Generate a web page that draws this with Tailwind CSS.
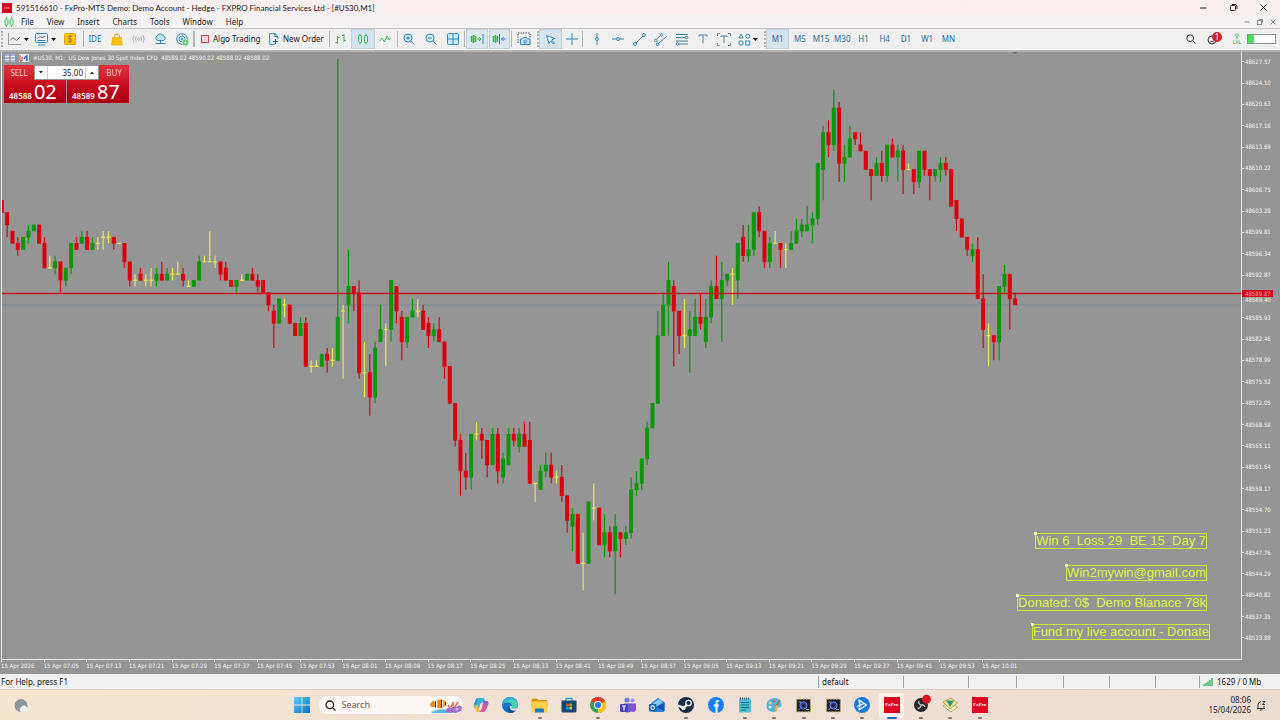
<!DOCTYPE html>
<html lang="en">
<head>
    <meta charset="UTF-8">
    <meta name="viewport" content="width=device-width, initial-scale=1.0">
    <title>591516610 - FxPro-MT5 Demo</title>
    <script src="https://cdn.jsdelivr.net/npm/@tailwindcss/browser@4"></script>
    <style>
        body { font-family: 'Noto Sans', 'Open Sans', sans-serif; }
        svg { display: block; flex-shrink: 0; }
        .ico { fill: none; stroke: #2c86b8; stroke-width: 1; }
    </style>
</head>
<body class="h-screen flex flex-col overflow-hidden bg-[#f3f1f2] text-[8px] leading-[12px] text-[#222]">

    <!-- Title bar -->
    <header class="flex h-[15px] shrink-0 items-center bg-linear-to-r from-[#f6f1f3] via-[#fbeeee] to-[#f8efee] pl-[2px]">
        <svg width="10" height="10" viewBox="0 0 10 10"><rect width="10" height="10" fill="#d9001b"/><path d="M2 5h6" stroke="#fff" stroke-width="1" stroke-dasharray="1.4 .4" opacity=".8"/></svg>
        <h1 class="ml-1 font-['Lato',sans-serif] whitespace-nowrap">591516610 - FxPro-MT5 Demo: Demo Account - Hedge - FXPRO Financial Services Ltd - [#US30,M1]</h1>
        <div class="ml-auto flex pr-[2px]">
            <button aria-label="Minimize" class="flex w-[30px] justify-center"><svg width="9" height="9" viewBox="0 0 9 9"><path d="M1 5h6.500" stroke="#222"/></svg></button>
            <button aria-label="Restore" class="flex w-[30px] justify-center"><svg width="9" height="9" viewBox="0 0 9 9" fill="none" stroke="#222"><rect x="1.500" y="2.500" width="5" height="5" rx="1"/><path d="M3 1.500h3q2 0 2 2v2.500"/></svg></button>
            <button aria-label="Close" class="flex w-[30px] justify-center"><svg width="9" height="9" viewBox="0 0 9 9"><path d="M1.500 1.500l6 6m0-6l-6 6" stroke="#222"/></svg></button>
        </div>
    </header>

    <!-- Menu -->
    <nav class="flex h-[13px] shrink-0 items-center bg-[#f4f2f2]">
        <svg class="ml-1" width="10" height="10" viewBox="0 0 10 10" fill="none" stroke="#3fc85a"><path d="M2.500 0v10M7.500 0v10"/><rect x="1" y="2" width="3" height="6" rx="1" fill="#f4f2f2"/><rect x="6" y="2" width="3" height="6" rx="1" fill="#f4f2f2"/></svg>
        <div class="ml-[7px] flex gap-[13px]">
            <button>File</button>
            <button>View</button>
            <button>Insert</button>
            <button>Charts</button>
            <button>Tools</button>
            <button>Window</button>
            <button>Help</button>
        </div>
        <div class="ml-auto flex gap-[5px] pr-[3px] opacity-50">
            <button aria-label="Minimize chart"><svg width="8" height="8" viewBox="0 0 8 8"><path d="M1.500 4h5" stroke="#222"/></svg></button>
            <button aria-label="Restore chart"><svg width="8" height="8" viewBox="0 0 8 8" fill="none" stroke="#222"><rect x="1.500" y="2.500" width="4" height="4"/><path d="M3 1.500h3.500V5"/></svg></button>
            <button aria-label="Close chart"><svg width="8" height="8" viewBox="0 0 8 8"><path d="M1.500 1.500l5 5m0-5l-5 5" stroke="#222"/></svg></button>
        </div>
    </nav>

    <!-- Toolbar -->
    <div class="flex h-[22px] shrink-0 items-center border-t border-[#c4c4c4] border-b border-b-white bg-[#f0f0f0] text-[#2b6c97]">
        <i class="h-4 w-[3px] border-r-2 border-dotted border-[#b5b5b5]"></i>
        <button aria-label="Chart type" class="flex h-full w-[27px] items-center gap-[2px] pl-[5px]">
            <svg class="ico" width="14" height="14" viewBox="0 0 14 14"><path d="M.5 1v11.500H13" stroke="#9a9a9a"/><path d="M2 8.500L5 5.500 8.500 8.500 12 5" stroke="#4d7f92"/></svg>
            <svg width="5" height="3"><path d="M0 0h5L2.500 3z" fill="#111"/></svg>
        </button>
        <button aria-label="Templates" class="flex h-full w-[27px] items-center gap-[2px] pl-[5px]">
            <svg class="ico" width="14" height="14" viewBox="0 0 14 14"><rect x=".5" y="1.500" width="12" height="9" rx="1"/><path d="M3 13h7M2.500 8.500h8" /><path d="M2.500 6.500l2.500-2 2 1.200L10.500 4" stroke="#4d7f92"/></svg>
            <svg width="5" height="3"><path d="M0 0h5L2.500 3z" fill="#111"/></svg>
        </button>
        <button aria-label="Symbols" class="flex h-full w-[26px] items-center justify-center">
            <svg width="12" height="12" viewBox="0 0 12 12"><rect x=".5" y=".5" width="11" height="11" rx="1" fill="#f9c513" stroke="#dca60c"/><path d="M8 4Q7.500 3 6 3T4 4.400 6 6t2 1.500T6 9 4 8M6 1.800v8.400" fill="none" stroke="#a5710a" stroke-width=".9"/></svg>
        </button>
        <i class="h-4 w-px bg-[#b4b4b4]"></i>
        <div class="flex h-full w-[109px]">
            <button class="flex-1">IDE</button>
            <button aria-label="Market" class="flex flex-1 items-center justify-center"><svg width="12" height="13" viewBox="0 0 12 13"><path d="M3.500 6V3.500a2.500 2.500 0 015 0V6" fill="none" stroke="#d39a09"/><path d="M1.500 4.500h9l.8 7.500H.7z" fill="#f8c115" stroke="#dfa50c" stroke-width=".6"/></svg></button>
            <button aria-label="Signals" class="flex flex-1 items-center justify-center"><svg width="13" height="10" viewBox="0 0 13 10" fill="none" stroke="#b8b8b8"><circle cx="6.500" cy="5" r="1.200"/><path d="M4.200 2.500q-1.700 2.500 0 5M8.800 2.500q1.700 2.500 0 5M2.200 1q-3 4 0 8M10.800 1q3 4 0 8"/></svg></button>
            <button aria-label="VPS" class="flex flex-1 items-center justify-center"><svg class="ico" width="13" height="12" viewBox="0 0 13 12"><path d="M3.500 7.500a2.600 2.600 0 01-.3-4.600 3.500 3.500 0 016.400.2 2.300 2.300 0 010 4.400z" fill="#bfe6f7"/><path d="M6.500 7.500V10M1.500 10.500h10"/></svg></button>
            <button aria-label="Services" class="flex flex-1 items-center justify-center"><svg class="ico" width="13" height="13" viewBox="0 0 13 13"><circle cx="6" cy="6" r="5.300"/><circle cx="6" cy="6" r="3"/><circle cx="6" cy="6" r="1"/><circle cx="9.500" cy="9.500" r="3.300" fill="#4cc95c" stroke="#f0f0f0" stroke-width=".5"/><path d="M9.500 7.700v3.600M7.700 9.500h3.600" stroke="#fff"/></svg></button>
        </div>
        <i class="h-4 w-[2px] bg-[#b4b4b4]"></i>
        <button class="flex h-full w-[68px] items-center gap-1 pl-[6px] text-[#222] whitespace-nowrap">
            <svg width="8" height="8" viewBox="0 0 8 8"><rect x=".5" y=".5" width="7" height="7" fill="#f8d4d6" stroke="#c74751"/></svg>Algo Trading
        </button>
        <button class="flex h-full w-[66px] items-center gap-1 pl-[6px] text-[#222] whitespace-nowrap">
            <svg class="ico" width="10" height="12" viewBox="0 0 10 12"><path d="M6 11.300H.7V.7H6L9 3.500V6"/><path d="M6 .7v3h3M6.500 6v5M4 8.500h5" stroke="#256a8c"/></svg>New Order
        </button>
        <i class="h-4 w-px bg-[#b4b4b4]"></i>
        <div class="flex h-full w-[66px]">
            <button aria-label="Bars" class="flex flex-1 items-center justify-center"><svg width="12" height="12" viewBox="0 0 12 12" fill="none" stroke="#3fae55"><path d="M2.500 3v8M.5 9.500h2M2.500 4.500h2M9 1v8M7 2.500h2M9 7.500h2"/></svg></button>
            <button aria-label="Candles" class="flex flex-1 items-center justify-center border border-[#c3cfd8] bg-[#d6e4ef]"><svg width="12" height="12" viewBox="0 0 12 12" fill="none" stroke="#35b650"><path d="M3 .5v11M9 .5v11"/><rect x="1.500" y="2.500" width="3" height="7" rx="1" fill="#d6f3da"/><rect x="7.500" y="2.500" width="3" height="7" rx="1" fill="#d6f3da"/></svg></button>
            <button aria-label="Line" class="flex flex-1 items-center justify-center"><svg width="12" height="8" viewBox="0 0 12 8" fill="none" stroke="#35b650"><path d="M.5 6l2.500-3 2.500 4 2.500-6 2 4 1.500-2"/></svg></button>
        </div>
        <i class="ml-px h-4 w-px bg-[#b4b4b4]"></i>
        <div class="flex h-full w-[66px]">
            <button aria-label="Zoom in" class="flex flex-1 items-center justify-center"><svg class="ico" width="12" height="12" viewBox="0 0 12 12"><circle cx="5" cy="5" r="4" fill="#d8eefa"/><path d="M8 8l3.500 3.500M3 5h4M5 3v4"/></svg></button>
            <button aria-label="Zoom out" class="flex flex-1 items-center justify-center"><svg class="ico" width="12" height="12" viewBox="0 0 12 12"><circle cx="5" cy="5" r="4" fill="#d8eefa"/><path d="M8 8l3.500 3.500M3 5h4"/></svg></button>
            <button aria-label="Tile windows" class="flex flex-1 items-center justify-center"><svg class="ico" width="12" height="12" viewBox="0 0 12 12"><rect x=".5" y=".5" width="11" height="11" rx="1" fill="#c9e9f8"/><path d="M6 .5v11M.5 6h11"/></svg></button>
        </div>
        <i class="h-4 w-px bg-[#b4b4b4]"></i>
        <div class="flex h-full w-[45px] gap-px pl-px">
            <button aria-label="Auto scroll" class="flex flex-1 items-center justify-center border border-[#c3cfd8] bg-[#dbe6ef]"><svg width="14" height="10" viewBox="0 0 14 10" fill="none" stroke="#35b650"><path d="M1.500 2v6M3.500 1v8M5.500 2v6" stroke-width="1.600"/><path d="M7 5h4M9 3l2 2-2 2"/><path d="M13 0v10" stroke="#2c86b8"/></svg></button>
            <button aria-label="Chart shift" class="flex flex-1 items-center justify-center border border-[#c3cfd8] bg-[#dbe6ef]"><svg width="14" height="10" viewBox="0 0 14 10" fill="none" stroke="#35b650"><path d="M1.500 2v6M3.500 1v8M5.500 2v6" stroke-width="1.600"/><path d="M7.500 0v10M13.500 5H9.500M11.500 3l-2 2 2 2" stroke="#2c86b8"/></svg></button>
        </div>
        <i class="ml-px h-4 w-px bg-[#b4b4b4]"></i>
        <button aria-label="Screenshot" class="flex h-full w-[24px] items-center justify-center"><svg class="ico" width="14" height="14" viewBox="0 0 14 14"><path d="M1 11V1h12v5" stroke="#555" stroke-dasharray="1.500 1"/><path d="M3.500 7h2l1-1.500h3L10.500 7h2.500v5.500H3.500z" fill="#c9e9f8"/><circle cx="8.200" cy="9.500" r="1.500"/></svg></button>
        <i class="h-4 w-[3px] border-r-2 border-dotted border-[#b5b5b5]"></i>
        <div class="flex h-full w-[43px]">
            <button aria-label="Cursor" class="flex flex-1 items-center justify-center border border-[#c3cfd8] bg-[#d6e4ef]"><svg class="ico" width="11" height="11" viewBox="0 0 11 11"><path d="M1.500 1.500l8 3-3 1.500 3 3-1 1-3-3L4 9.500z" fill="#e6f4fb"/></svg></button>
            <button aria-label="Crosshair" class="flex flex-1 items-center justify-center"><svg class="ico" width="12" height="12" viewBox="0 0 12 12"><path d="M6 0v5M6 7v5M0 6h5M7 6h5"/><circle cx="6" cy="6" r=".6"/></svg></button>
        </div>
        <i class="h-4 w-px bg-[#b4b4b4]"></i>
        <div class="ml-[3px] flex h-full w-[149px]">
            <button aria-label="Vertical line" class="flex flex-1 items-center justify-center"><svg class="ico" width="6" height="12" viewBox="0 0 6 12"><path d="M3 0v4.500M3 7.500V12" stroke="#4d7f92"/><circle cx="3" cy="6" r="1.500"/></svg></button>
            <button aria-label="Horizontal line" class="flex flex-1 items-center justify-center"><svg class="ico" width="12" height="6" viewBox="0 0 12 6"><path d="M0 3h4.500M7.500 3H12" stroke="#4d7f92"/><circle cx="6" cy="3" r="1.500"/></svg></button>
            <button aria-label="Trendline" class="flex flex-1 items-center justify-center"><svg class="ico" width="13" height="13" viewBox="0 0 13 13"><path d="M3 10l7-7" stroke="#4d7f92"/><circle cx="2" cy="11" r="1.400"/><circle cx="11" cy="2" r="1.400"/></svg></button>
            <button aria-label="Channel" class="flex flex-1 items-center justify-center"><svg class="ico" width="13" height="13" viewBox="0 0 13 13"><path d="M2.500 6.500l4-4M4.500 10.500l8-7" stroke="#4d7f92"/><circle cx="1.800" cy="7.500" r="1.300"/><circle cx="7.500" cy="1.800" r="1.300"/><circle cx="3.500" cy="11.200" r="1.300"/></svg></button>
            <button aria-label="Fibonacci" class="flex flex-1 items-center justify-center"><svg class="ico" width="14" height="13" viewBox="0 0 14 13"><path d="M1 1.500h12M1 4.500h9M1 8h12M4 11h9" stroke="#4d7f92"/><circle cx="11.500" cy="4.500" r="1.300"/><circle cx="2.500" cy="11" r="1.300"/></svg></button>
            <button aria-label="Text" class="flex flex-1 items-center justify-center"><svg class="ico" width="10" height="10" viewBox="0 0 10 10"><path d="M1 2.500V1h8v1.500M5 1v8.500" stroke="#4d86a8"/></svg></button>
            <button aria-label="Label" class="flex flex-1 items-center justify-center"><svg class="ico" width="14" height="13" viewBox="0 0 14 13"><path d="M.5 3V.5H3M11 .5h2.500V3M.5 10v2.500H3M11 12.500h2.500V10" stroke="#555" stroke-dasharray="1.500 .7"/><path d="M4 4V3h6v1M7 3v7" stroke="#4d86a8"/></svg></button>
        </div>
        <button aria-label="Shapes" class="flex h-full w-[28px] items-center gap-[2px] pl-[3px]">
            <svg class="ico" width="13" height="13" viewBox="0 0 13 13"><path d="M3 1.200L5.200 5H.8z"/><circle cx="9.800" cy="3.200" r="2"/><rect x="1" y="8" width="4" height="4" rx="1"/><rect x="7.800" y="8" width="4" height="4"/></svg>
            <svg width="5" height="3"><path d="M0 0h5L2.500 3z" fill="#111"/></svg>
        </button>
        <i class="h-4 w-[3px] border-r-2 border-dotted border-[#b5b5b5]"></i>
        <div class="flex h-full w-[193px]">
            <button class="flex-1 border border-[#c3cfd8] bg-[#d6e4ef]">M1</button>
            <button class="flex-1">M5</button>
            <button class="flex-1">M15</button>
            <button class="flex-1">M30</button>
            <button class="flex-1">H1</button>
            <button class="flex-1">H4</button>
            <button class="flex-1">D1</button>
            <button class="flex-1">W1</button>
            <button class="flex-1">MN</button>
        </div>
        <div class="ml-auto flex items-center pr-[4px]">
            <button aria-label="Search"><svg width="10" height="10" viewBox="0 0 10 10" fill="none" stroke="#333"><circle cx="4.200" cy="4.200" r="3.400"/><path d="M6.800 6.800L9.500 9.500"/></svg></button>
            <button aria-label="Notifications" class="ml-[11px]"><svg width="16" height="14" viewBox="0 0 16 14"><circle cx="5" cy="8" r="4" fill="none" stroke="#444"/><path d="M2.500 10.500q2.500-2.500 5 0" fill="none" stroke="#444"/><circle cx="10" cy="5" r="5" fill="#d3222b"/><text x="10" y="8" font-size="8" text-anchor="middle" fill="#fff">1</text></svg></button>
            <div class="ml-[10px] flex flex-col items-center text-[5px] leading-[6px] text-[#25a842]">
                <svg width="6" height="6" viewBox="0 0 6 6" fill="none" stroke="#3cc45a"><path d="M3 .7L5 2.500 3 4.200 1 2.500zM3 4v2"/></svg>
                <span>LVL</span>
            </div>
            <div class="ml-[6px] h-[10px] w-[29px] border border-[#8f8f8f] bg-white"><div class="h-full w-[6px] bg-[#4be05a]"></div></div>
        </div>
    </div>

    <!-- Chart window -->
    <main class="flex min-h-0 flex-1 flex-col border-t-2 border-t-[#b3b3b3] bg-[#959595] pl-px font-['DejaVu_Sans_Condensed','DejaVu_Sans',sans-serif] text-[6px] leading-[8px] text-[#f4f4f4]">
        <div class="flex min-h-0 flex-1">
            <div class="relative flex-1 overflow-hidden border-r border-b border-l border-[#e8e8e8]">
                <svg id="plot" class="h-full w-full" aria-label="US30 M1 candles"></svg>

                <div class="absolute top-[2px] left-[3px] flex items-center whitespace-pre">
                    <svg width="10" height="8" viewBox="0 0 10 8"><rect width="10" height="8" fill="#e9eef6"/><path d="M0 1h10M0 4h10M0 7h10" stroke="#4d7fc0"/><path d="M5 0v8" stroke="#d55"/></svg>
                    <svg class="ml-[4px]" width="10" height="8" viewBox="0 0 10 8"><rect width="10" height="8" fill="#e9eef6"/><path d="M1 1v6h2V3" stroke="#d33" fill="none"/><path d="M5 5l2-3M8 1v6" stroke="#3a6fc0" stroke-width="1.500"/></svg>
                    <span class="ml-[4px]">#US30, M1:  US Dow Jones 30 Spot Index CFD  48589.02 48590.02 48588.02 48588.02</span>
                </div>

                <!-- One click trading -->
                <div class="absolute top-[13px] left-[2px] w-[125px] font-['Noto_Sans',sans-serif] text-white">
                    <div class="flex h-[15px] items-center">
                        <button class="h-full w-[30px] bg-linear-to-b from-[#e0323d] to-[#cf1a28] text-[8px] text-[#ffc9c9]">SELL</button>
                        <div class="mx-px flex h-[13px] flex-1 items-center bg-white text-[8px] text-[#222]">
                            <button aria-label="Decrease volume" class="flex h-full w-[13px] items-center justify-center border-r border-[#ccc]"><svg width="4" height="3"><path d="M0 0h4L2 2.500z" fill="#222"/></svg></button>
                            <input aria-label="Volume" value="35.00" class="w-0 flex-1 pr-[2px] text-right outline-none">
                            <button aria-label="Increase volume" class="flex h-full w-[13px] items-center justify-center border-l border-[#ccc]"><svg width="4" height="3"><path d="M0 3h4L2 .5z" fill="#222"/></svg></button>
                        </div>
                        <button class="h-full w-[30px] bg-linear-to-b from-[#e0323d] to-[#cf1a28] text-[8px] text-[#ffc9c9]">BUY</button>
                    </div>
                    <div class="flex gap-px">
                        <button class="flex h-[23px] flex-1 items-baseline gap-[2px] bg-linear-to-b from-[#cf1222] to-[#a80012] pl-[5px] text-[8px] leading-[23px] font-semibold">48588<span class="text-[20px] font-normal">02</span></button>
                        <button class="flex h-[23px] flex-1 items-baseline gap-[2px] bg-linear-to-b from-[#cf1222] to-[#a80012] pl-[5px] text-[8px] leading-[23px] font-semibold">48589<span class="text-[20px] font-normal">87</span></button>
                    </div>
                </div>

                <!-- Text labels placed on the chart -->
                <div class="absolute right-[31px] bottom-[19px] flex flex-col items-end font-['Liberation_Sans',sans-serif] text-[13px] leading-[14px] whitespace-pre text-[#dcf545]">
                    <p class="relative mr-[3px] mb-4 border border-[#cdea32]"><i class="absolute -top-[2px] -left-[2px] size-[3px] bg-[#f4fbb0]"></i>Win 6  Loss 29  BE 15  Day 7</p>
                    <p class="relative mr-[3px] mb-[14px] border border-[#cdea32]"><i class="absolute -top-[2px] -left-[2px] size-[3px] bg-[#f4fbb0]"></i>Win2mywin@gmail.com</p>
                    <p class="relative mr-[3px] mb-[13px] border border-[#cdea32]"><i class="absolute -top-[2px] -left-[2px] size-[3px] bg-[#f4fbb0]"></i>Donated: 0$  Demo Blanace 78k</p>
                    <p class="relative border border-[#cdea32]"><i class="absolute -top-[2px] -left-[2px] size-[3px] bg-[#f4fbb0]"></i>Fund my live account - Donate</p>
                </div>
            </div>
            <div class="relative w-[38px] overflow-hidden">
                <div id="prices" class="-mt-px"></div>
                <div id="near" class="absolute left-[3px] leading-[6px]">48589.40</div>
                <div id="ask" class="absolute left-0 h-[7px] w-[31px] bg-[#d0021b] pl-[3px] leading-[7px] text-[#f5a5a5]">48589.87</div>
            </div>
        </div>
        <div id="times" class="flex h-[14px]"></div>
    </main>

    <!-- Status bar -->
    <div class="flex h-[15px] shrink-0 items-center bg-[#f1f1f1] text-[#111]">
        <span class="flex-1 pl-px">For Help, press F1</span>
        <span class="h-3 w-[85px] border-l border-[#a0a0a0] pl-[3px]">default</span>
        <i class="h-3 w-[65px] border-l border-[#a0a0a0]"></i>
        <i class="h-3 w-[48px] border-l border-[#a0a0a0]"></i>
        <i class="h-3 w-[47px] border-l border-[#a0a0a0]"></i>
        <i class="h-3 w-[46px] border-l border-[#a0a0a0]"></i>
        <i class="h-3 w-[46px] border-l border-[#a0a0a0]"></i>
        <i class="h-3 w-[44px] border-l border-[#a0a0a0]"></i>
        <span class="flex h-3 w-[81px] items-center gap-1 border-l border-[#a0a0a0] pl-[3px]">
            <svg width="10" height="8" viewBox="0 0 10 8"><path d="M1 8V6M3 8V5M5 8V3.500M7 8V2M9 8V0" stroke="#3cb85a" stroke-width="1.400"/></svg>1629 / 0 Mb
        </span>
    </div>

    <!-- Taskbar -->
    <footer class="grid h-[31px] shrink-0 grid-cols-[1fr_auto_1fr] items-center border-t border-[#dccfc8] bg-linear-to-r from-[#f5e5cd] via-[#f1e0d6] to-[#eddcd2]">
        <button aria-label="Weather" class="ml-[14px] justify-self-start"><svg width="15" height="15" viewBox="0 0 15 15"><circle cx="7" cy="7.500" r="6.500" fill="#8d959e"/><path d="M7 14a3 3 0 01.3-5 3 3 0 015.400.5 2.300 2.300 0 01.3 4z" fill="#f2f5f8"/></svg></button>
        <div class="flex items-center pl-[3px]">
            <button aria-label="Start" class="mr-[8px] ml-[5px]"><svg width="16" height="16" viewBox="0 0 16 16"><defs><linearGradient id="win" x2="1" y2="1"><stop stop-color="#5cd0f7"/><stop offset="1" stop-color="#0670c9"/></linearGradient></defs><path d="M0 0h7.600v7.600H0zM8.400 0H16v7.600H8.400zM0 8.400h7.600V16H0zM8.400 8.400H16V16H8.400z" fill="url(#win)"/></svg></button>
            <label class="flex h-5 w-[146px] items-center rounded-full border border-[#eee3da] bg-[#fdf8f3] pl-[6px]">
                <svg width="11" height="11" viewBox="0 0 11 11" fill="none" stroke="#222" stroke-width="1.300"><circle cx="4.800" cy="4.800" r="3.800"/><path d="M7.600 7.600l2.900 2.900"/></svg>
                <input type="search" aria-label="Search" placeholder="Search" class="ml-[6px] w-0 flex-1 text-[9px] placeholder-[#5c5c5c] outline-none">
                <svg width="34" height="18" viewBox="0 0 34 18"><path d="M2 16q8-4 16-2l10 1-6 2H4z" fill="#59b8de"/><path d="M1 8L4 4.500 5.500 6q5-4 10-1.500L18 7.500 15 11q-5 2.500-9 0L2 11z" fill="#ec8a1c"/><path d="M6.500 5v6.500M12.500 4v8M16.500 6v3.500" stroke="#222" stroke-width=".9"/><path d="M7.700 4.500v7.500M13.700 4.500v7" stroke="#fff" stroke-width="1.100"/><path d="M16 16q2-6 6-4 2-3 5-1 4-3 6 0l-1 4-5 2z" fill="#9a6fd0"/><path d="M21 12l-2-3M24 10V6M26 11l3-5M22 11l2-4" stroke="#e56a4e" stroke-width="1.600"/><circle cx="28" cy="13" r="1.600" fill="#e9a6d8"/></svg>
            </label>
            <div class="ml-[3px] flex w-[528px]">
                <button aria-label="Copilot" class="relative flex h-[26px] flex-1 items-center justify-center"><svg width="16" height="16" viewBox="0 0 16 16"><path d="M5 1h5l2 3-3 1-3 6H2Q0 10 1 7l2-5z" fill="#2b8fe0"/><path d="M5 1h5q1.500 0 2 3H9L7 8 3 9z" fill="#37b6d6"/><path d="M1 8h4l1 5q.5 2 2 2H5Q3 15 2.500 12z" fill="#f6b63a"/><path d="M10 4h4q2 1 1 4l-2 5q-1 2-3 2H6q2-1 3-4z" fill="#e0569a"/><path d="M11 4h3q2 1 1 4l-4 0z" fill="#9a5be0"/><path d="M7.500 6.500h2l-1.500 4H6z" fill="#f3e3d6"/></svg></button>
                <button aria-label="Edge" class="relative flex h-[26px] flex-1 items-center justify-center"><svg width="16" height="16" viewBox="0 0 16 16"><circle cx="8" cy="8" r="8" fill="#1477c9"/><path d="M.2 7A8 8 0 0116 8q0 3.500-4 3.500-3 0-2-2.500 0-3-3-3.500Q2.500 5 .2 7z" fill="#43cfa8"/><path d="M.2 7A8 8 0 018 0q5 0 7 4-3-3-7-1T.2 7z" fill="#31b5dc"/><path d="M6.500 8q-.5 5 5 5.500 2 0 3-.8Q12 16 8 15.800 3.500 13 6.500 8z" fill="#0c4f9c"/><path d="M10 9q-1.500 3 3.500 2.500l2-1V13l-3.500.8Q7 13 8 9z" fill="#f0dfd3"/></svg></button>
                <button aria-label="File Explorer" class="relative flex h-[26px] flex-1 items-center justify-center"><svg width="17" height="15" viewBox="0 0 17 15"><path d="M.5 2q0-1.500 1.500-1.500h4L7.500 2H15q1.500 0 1.500 1.500V8H.5z" fill="#d9940f"/><rect x=".5" y="3.500" width="16" height="11" rx="1.200" fill="#fbd04d"/><path d="M4 11.500q0-1 1-1h7q1 0 1 1v3H4z" fill="#1976c9"/></svg><i class="absolute -bottom-px h-[2px] w-1 rounded-full bg-[#7d7570]"></i></button>
                <button aria-label="Store" class="relative flex h-[26px] flex-1 items-center justify-center"><svg width="16" height="16" viewBox="0 0 16 16"><path d="M5 4V1.500h6V4" fill="none" stroke="#2b9fd8" stroke-width="1.300"/><path d="M.5 3.500h15V14q0 1.500-1.500 1.500H2Q.5 15.500.5 14z" fill="#12496f"/><path d="M5 6.500h2.700v2.700H5z" fill="#f25022"/><path d="M8.300 6.500H11v2.700H8.300z" fill="#7fba00"/><path d="M5 9.800h2.700v2.700H5z" fill="#00a4ef"/><path d="M8.300 9.800H11v2.700H8.300z" fill="#ffb900"/></svg></button>
                <button aria-label="Chrome" class="relative flex h-[26px] flex-1 items-center justify-center"><svg width="16" height="16" viewBox="0 0 16 16"><circle cx="8" cy="8" r="8" fill="#33a352"/><path d="M8 8L1.100 4A8 8 0 0115 4z" fill="#e33b2e"/><path d="M8 8l7-4a8 8 0 01-7 12z" fill="#fbc116"/><path d="M8 4h7L8 8z" fill="#e33b2e"/><circle cx="8" cy="8" r="4" fill="#fff"/><circle cx="8" cy="8" r="3.100" fill="#2a79e8"/></svg><i class="absolute -bottom-px h-[2px] w-1 rounded-full bg-[#7d7570]"></i></button>
                <button aria-label="Teams" class="relative flex h-[26px] flex-1 items-center justify-center"><svg width="16" height="16" viewBox="0 0 16 16"><circle cx="7" cy="3" r="2.600" fill="#7b78e8"/><circle cx="12.500" cy="3.500" r="2" fill="#9b8ff0"/><path d="M4 6.500h7.500V12q0 3.500-4 3.500T4 12z" fill="#6a5fd8"/><path d="M10.500 6.500H16V12q0 3-3 3-1.500 0-2.500-1z" fill="#8a4fd0"/><rect y="7" width="8" height="8" rx="1.200" fill="#4b3fc0"/><path d="M2 9h4M4 9v4.500" stroke="#fff" stroke-width="1.200"/></svg></button>
                <button aria-label="Outlook" class="relative flex h-[26px] flex-1 items-center justify-center"><svg width="16" height="16" viewBox="0 0 16 16"><path d="M2 6l7-5 6.500 4v8.500q0 1.500-1.500 1.500H4z" fill="#2c7fe0"/><path d="M4 6l6-4 4 3-8 6z" fill="#82c9f8"/><path d="M15.500 6v8L7 10z" fill="#1550b5"/><rect y="7" width="7.500" height="7.500" rx="1.200" fill="#1160bd"/><circle cx="3.700" cy="10.700" r="1.800" fill="none" stroke="#fff" stroke-width="1.100"/></svg></button>
                <button aria-label="Steam" class="relative flex h-[26px] flex-1 items-center justify-center"><svg width="16" height="16" viewBox="0 0 16 16"><circle cx="8" cy="8" r="8" fill="#172b44"/><circle cx="10.500" cy="6" r="2.700" fill="none" stroke="#fff" stroke-width="1.300"/><path d="M0 8.500l5.500 2.300 3.500-3" stroke="#fff" stroke-width="2.200" fill="none"/><circle cx="5.500" cy="11.200" r="2" fill="#fff"/></svg><i class="absolute -bottom-px h-[2px] w-1 rounded-full bg-[#7d7570]"></i></button>
                <button aria-label="Facebook" class="relative flex h-[26px] flex-1 items-center justify-center"><svg width="16" height="16" viewBox="0 0 16 16"><circle cx="8" cy="8" r="8" fill="#1283f0"/><path d="M11 4H9.800Q8.500 4 8.500 5.500V16M5.800 8.500h5" fill="none" stroke="#fff" stroke-width="1.900"/></svg></button>
                <button aria-label="Notepad" class="relative flex h-[26px] flex-1 items-center justify-center"><svg width="14" height="16" viewBox="0 0 14 16"><rect x="1" y="1.500" width="12" height="14" rx="1" fill="#48c3d6"/><path d="M2 1.500h10" stroke="#3d5a66" stroke-width="2" stroke-dasharray="1 1"/><path d="M3 5.500h8M3 8h8M3 10.500h8M3 13h5" stroke="#146c8c"/></svg><i class="absolute -bottom-px h-[2px] w-1 rounded-full bg-[#7d7570]"></i></button>
                <button aria-label="Paint" class="relative flex h-[26px] flex-1 items-center justify-center"><svg width="16" height="16" viewBox="0 0 16 16"><path d="M.5 8Q1 1.500 8 1t7.500 6.500q0 3-3 3-2 0-2 2.500T7 15Q0 14 .5 8z" fill="#55b4d8"/><circle cx="4" cy="6" r="1.300" fill="#f5d04a"/><circle cx="8" cy="4" r="1.300" fill="#e45a4a"/><circle cx="4" cy="10" r="1.300" fill="#fff"/><path d="M14 3l-4 6" stroke="#a8703a" stroke-width="1.500"/><path d="M10 8l2 1-1 6-2-3z" fill="#e9b46a"/></svg><i class="absolute -bottom-px h-[2px] w-1 rounded-full bg-[#7d7570]"></i></button>
                <button aria-label="Trading bot 1" class="relative flex h-[26px] flex-1 items-center justify-center"><svg width="15" height="15" viewBox="0 0 15 15"><rect x=".7" y="1.200" width="13.600" height="12.600" fill="#17192e" stroke="#b6a04a" stroke-dasharray="2 1"/><circle cx="7.500" cy="7.500" r="3.600" fill="#31438f" stroke="#6c86d8"/><circle cx="7.500" cy="7.500" r="1.300" fill="#0c0f20"/><path d="M2.500 4h3M10 11.500h3M2.500 11.500l2-1" stroke="#8594d0"/></svg><i class="absolute -bottom-px h-[2px] w-1 rounded-full bg-[#7d7570]"></i></button>
                <button aria-label="Trading bot 2" class="relative flex h-[26px] flex-1 items-center justify-center"><svg width="15" height="15" viewBox="0 0 15 15"><rect x=".7" y="1.200" width="13.600" height="12.600" fill="#17192e" stroke="#b6a04a" stroke-dasharray="2 1"/><circle cx="7.500" cy="7.500" r="3.600" fill="#31438f" stroke="#6c86d8"/><circle cx="7.500" cy="7.500" r="1.300" fill="#0c0f20"/><path d="M2.500 4h3M10 11.500h3M2.500 11.500l2-1" stroke="#8594d0"/></svg><i class="absolute -bottom-px h-[2px] w-1 rounded-full bg-[#7d7570]"></i></button>
                <button aria-label="Media player" class="relative flex h-[26px] flex-1 items-center justify-center"><svg width="16" height="16" viewBox="0 0 16 16"><circle cx="8" cy="8" r="8" fill="#1878dc"/><path d="M5 3l7.500 5L5 13l1-5z" fill="none" stroke="#fff" stroke-width="1.300" stroke-linejoin="round"/><path d="M3 9.500l7-3" stroke="#fff" stroke-width="1.200"/></svg><i class="absolute -bottom-px h-[2px] w-1 rounded-full bg-[#7d7570]"></i></button>
                <button aria-label="FxPro terminal" class="relative flex h-[26px] flex-1 items-center justify-center"><span class="flex h-[25px] w-[25px] items-center justify-center rounded-[3px] bg-[#fbf1ea]"><span class="flex size-4 items-center justify-center bg-[#dc0420] font-['Liberation_Serif',serif] text-[5px] leading-[6px] font-bold text-white">FxPro</span></span><i class="absolute -bottom-px h-[2px] w-[10px] rounded-full bg-[#0f6cbd]"></i></button>
                <button aria-label="OBS Studio" class="relative flex h-[26px] flex-1 items-center justify-center"><svg class="overflow-visible" width="14" height="14" viewBox="0 0 14 14"><circle cx="7" cy="7" r="7" fill="#2a2629"/><path d="M7 7q-3-1-2-4M7 7q3-1 4 2M7 7q0 3-3.500 3.500" fill="none" stroke="#c9c4c6" stroke-width="1.300"/><circle cx="12.500" cy="1.200" r="4.400" fill="#e0141e"/></svg><i class="absolute -bottom-px h-[2px] w-1 rounded-full bg-[#7d7570]"></i></button>
                <button aria-label="MetaEditor" class="relative flex h-[26px] flex-1 items-center justify-center"><svg width="16" height="16" viewBox="0 0 16 16"><path d="M1 9l8 6 6.500-5L8 5z" fill="#f6f0c8" stroke="#a58f3a" stroke-width=".7"/><path d="M1 5l8-4 6.500 5L8 12z" fill="#e9dfa0" stroke="#a58f3a" stroke-width=".7"/><path d="M4 3.500h8l-3.800 6.500z" fill="#3a9f56"/><path d="M6.500 4.500h4L8.500 8z" fill="#3b7fd0"/></svg><i class="absolute -bottom-px h-[2px] w-1 rounded-full bg-[#7d7570]"></i></button>
                <button aria-label="FxPro" class="relative flex h-[26px] flex-1 items-center justify-center"><span class="flex size-4 items-center justify-center bg-[#dc0420] font-['Liberation_Serif',serif] text-[5px] leading-[6px] font-bold text-white">FxPro</span><i class="absolute -bottom-px h-[2px] w-1 rounded-full bg-[#7d7570]"></i></button>
            </div>
        </div>
        <div class="flex items-center gap-[5px] justify-self-end pr-[13px]">
            <time class="text-right leading-[10px]">08:06<br>15/04/2026</time>
            <button aria-label="Notifications and calendar"><svg width="11" height="11" viewBox="0 0 11 11" fill="none" stroke="#333"><path d="M1 8.500h8M2 8.500V5q0-3 3-3.500M8 8.500V6M4 10h2.500M6.500 1.500h2.500L6.500 4.500H9"/></svg></button>
        </div>
    </footer>

    <script>
        // open, high, low, close in points relative to 48588.02
        const candles = [
            [17,17,15,15],[15,15,11,13],[12,12,10,10],[10,11,8,9],[9,11,9,11],[11,13,10,12],[12,13,12,13],[13,13,10,10],
            [10,11,6,6],[6,8,6,6],[6,8,5,7],[7,7,2,4],[4,6,3,6],[6,10,5,10],[10,11,9,9],[10,12,10,11],
            [11,12,9,9],[9,11,9,10],[10,11,9,10],[11,12,9,11],[11,12,10,11],[11,11,9,10],[10,10,10,10],[10,10,6,7],
            [7,7,3,4],[4,5,3,4],[5,6,4,4],[4,5,3,4],[4,6,3,4],[4,6,3,5],[5,7,4,4],[4,6,4,5],
            [5,6,4,5],[5,7,5,5],[5,6,3,4],[3,4,3,3],[3,4,3,4],[4,8,4,7],[7,8,7,7],[7,12,7,7],
            [7,8,6,7],[7,7,4,5],[6,7,4,4],[4,4,3,3],[3,4,2,4],[4,5,4,4],[4,5,4,5],[5,6,4,4],
            [4,5,2,3],[4,4,2,2],[2,2,-1,0],[-1,0,-7,-3],[-3,1,-3,1],[0,1,-2,0],[0,0,-3,-3],[-3,-3,-5,-5],
            [-5,-2,-5,-3],[-3,-2,-10,-10],[-10,-9,-11,-10],[-10,-9,-10,-10],[-10,-8,-10,-8],[-8,-7,-11,-9],[-9,-7,-10,-9],[-9,40,-9,-2],
            [-1,0,-12,-1],[0,9,-3,3],[3,3,-1,2],[2,4,-12,-11],[-11,-6,-15,-11],[-11,-8,-18,-15],[-15,-6,-16,-7],[-6,0,-6,-4],
            [-4,-3,-10,-4],[-4,4,-6,4],[3,3,-3,-1],[-2,-1,-9,-6],[-6,-2,-7,-2],[-2,1,-2,-1],[-1,1,-2,-1],[-1,0,-4,-4],
            [-3,-2,-7,-5],[-5,-3,-6,-4],[-4,-2,-6,-6],[-6,-6,-12,-10],[-10,-10,-16,-16],[-16,-16,-23,-22],[-22,-21,-31,-27],[-27,-24,-30,-28],
            [-28,-21,-30,-21],[-21,-19,-22,-21],[-21,-20,-25,-22],[-22,-22,-28,-26],[-26,-20,-26,-21],[-21,-20,-29,-27],[-28,-24,-29,-25],[-26,-20,-26,-21],
            [-21,-20,-23,-22],[-23,-20,-24,-21],[-21,-19,-23,-23],[-22,-19,-29,-29],[-29,-29,-32,-29],[-30,-26,-30,-27],[-27,-24,-28,-26],[-26,-24,-29,-28],
            [-28,-27,-29,-28],[-28,-26,-32,-31],[-31,-31,-37,-35],[-36,-33,-40,-34],[-34,-34,-42,-42],[-42,-37,-46.4,-42],[-42,-32,-42,-32],[-33,-29,-35,-33],
            [-33,-33,-39,-39],[-39,-34,-41,-37],[-37,-36,-41,-40],[-40,-34,-47,-36],[-37,-37,-41,-38],[-38,-36,-39,-37],[-37,-28,-38,-30],[-30,-27,-31,-29],
            [-29,-25,-30,-25],[-25,-19,-26,-20],[-20,-16,-20,-16],[-16,-1,-16,-5],[-5,2,-5,0],[0,7,-5,4],[3,4,-10,-1],[-1,-1,-8,-5],
            [-5,1,-7,-5],[-5,-1,-11,-4],[-5,1,-5,-2],[-2,2,-4,-3],[-6,1,-7,-2],[-2,4,-3,3],[3,8,1,1],[1,7,-6,4],
            [4,5,3,5],[5,6,0,5],[4,10,1,10],[11,13,7,8],[8,13,7,9],[9,15,8,15],[15,16,11,12],[12,12,6,7],
            [7,11,6,10],[10,12,10,10],[10,10,6,9],[9,10,6,9],[9,12,9,10],[10,14,10,12],[12,14,11,13],[12,16,12,13],
            [13,15,10,14],[14,23,13,23],[22,29,17,28],[28,30,24,26],[26,35,25,32],[32,33,20,23],[23,26,20,24],[24,29,24,27],
            [28,28,26,27],[26,28,25,25],[25,25,22,22],[22,22,17,21],[21,24,21,23],[23,25,20,21],[21,26,20,26],[26,27,24,24],
            [24,26,20,25],[25,26,18,22],[22,23,22,22],[22,22,18,20],[20,25,19,25],[25,25,21,22],[22,22,17,21],[21,22,20,22],
            [22,24,20,23],[23,24,21,22],[22,22,16,16],[17,17,12,14],[14,14,11,11],[11,11,8,9],[8,10,7,9],[9,11,1,1],
            [1,5,-7,-4],[-5,-3,-10,-5],[-5,-5,-9,-6],[-6,3,-9,3],[3,6.5,2,5],[5,5,-4,1],[1,2,0,0]
        ];

        const PITCH = 16 / 3;      // px between candles
        const POINT = 6.155;       // px per index point
        const BASE_Y = 252.9;      // y of 48588.02
        const STEP = 3.47;         // price scale step
        const TOP_PRICE = 48627.57;
        const y = v => BASE_Y - v * POINT;

        const rect = (x, top, w, h, fill) => `<rect x="${x}" y="${top}" width="${w}" height="${h}" fill="${fill}"/>`;
        let out = rect(0, 252.5, '100%', 1, '#7f8890');
        candles.forEach(([o, h, l, c], i) => {
            const x = i * PITCH - 0.2;
            const color = c > o ? '#0f960f' : c < o ? '#dc000f' : '#e6e850';
            if (h > l) out += rect(x - 0.6, y(h), 1.2, y(l) - y(h), color);
            out += c === o
                ? rect(x - 2, y(c) - 0.6, 4, 1.2, color)
                : rect(x - 2, y(Math.max(o, c)) - 0.3, 4, Math.abs(o - c) * POINT + 0.6, color);
        });
        out += rect(0, 240.8, '100%', 1.4, '#d00c1c');
        out += '<path d="M1010 0h6l-3 2z" fill="#5f7068"/>';
        document.getElementById('plot').innerHTML = out;

        // Price scale; the label next to the ask price is placed below it
        let prices = '';
        for (let i = 0; i < 28; i++) {
            const label = i === 11 ? '' : (TOP_PRICE - i * STEP).toFixed(2);
            prices += `<div class="flex items-center" style="height:${STEP * POINT}px"><i class="h-px w-[2px] bg-[#e8e8e8]"></i><span class="ml-px">${label}</span></div>`;
        }
        document.getElementById('prices').innerHTML = prices;
        document.getElementById('ask').style.top = Math.round(y(1.85) - 3.5) + 'px';
        document.getElementById('near').style.top = Math.round(y(1.85) + 3.5) + 'px';

        // Time scale, one label every 8 candles from 06:57
        let times = '';
        for (let i = 0; i < 24; i++) {
            const m = 6 * 60 + 57 + i * 8;
            const hhmm = String(Math.floor(m / 60)).padStart(2, '0') + ':' + String(m % 60).padStart(2, '0');
            times += `<div class="relative shrink-0 pt-[2px] whitespace-nowrap" style="width:${8 * PITCH}px"><i class="absolute top-0 left-0 h-[2px] w-px bg-[#e8e8e8]"></i>15 Apr ${i ? hhmm : '2026'}</div>`;
        }
        document.getElementById('times').innerHTML = times;
    </script>
</body>
</html>
